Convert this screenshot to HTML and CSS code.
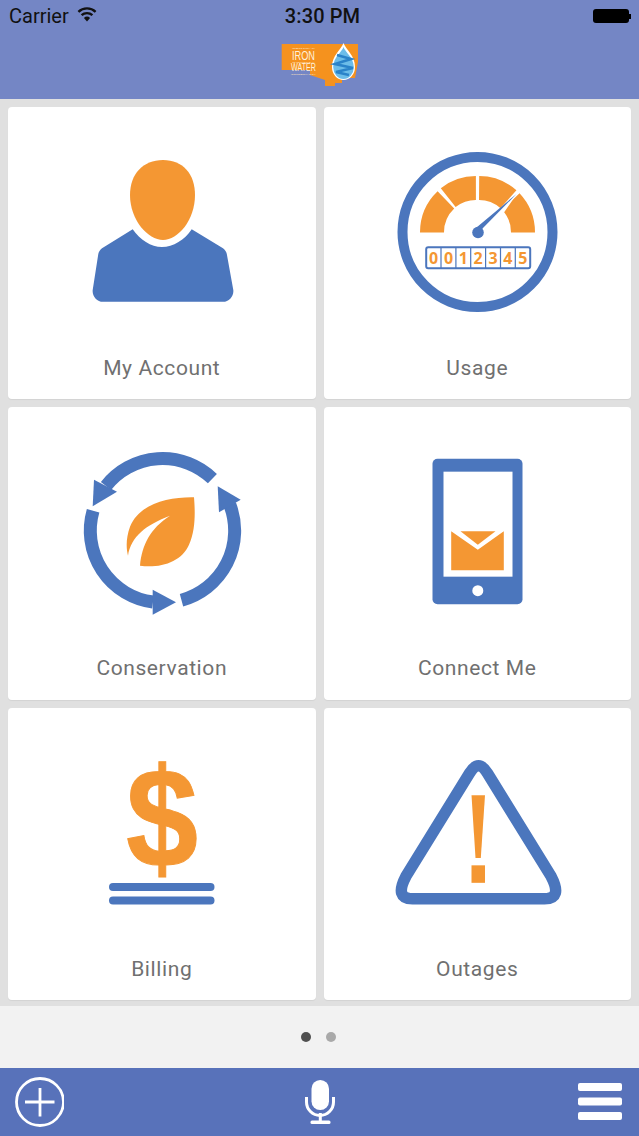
FILE: index.html
```html
<!DOCTYPE html>
<html lang="en">
<head>
<meta charset="utf-8">
<title>Central Iron County Water</title>
<link rel="stylesheet" href="styles.css">
</head>
<body>
<div class="app">
  <header class="header">
    <div class="status">
      <div class="status-left">
        <span>Carrier</span>
        <svg class="wifi" viewBox="0 0 20 15"><path d="M10 14.5 6.9 11a4.6 4.6 0 0 1 6.2 0Z" fill="#111"/><path d="M4.6 8.2a8 8 0 0 1 10.8 0" class="wifi-arc"/><path d="M1.4 4.8a12.6 12.6 0 0 1 17.2 0" class="wifi-arc"/></svg>
      </div>
      <div class="status-time">3:30 PM</div>
      <div class="status-right"><span class="battery"></span><span class="battery-tip"></span></div>
    </div>
    <svg class="logo" viewBox="281 42 78 45">
      <path class="logo-shape" d="M281.700 44H358V62L355 78H342V83H335V86H325V80L310 75V70H281.700Z"/>
      <text class="logo-small" x="292" y="49" textLength="23" lengthAdjust="spacingAndGlyphs">CENTRAL</text>
      <text class="logo-big" x="292" y="60" textLength="23" lengthAdjust="spacingAndGlyphs">IRON</text>
      <text class="logo-small" x="292" y="63" textLength="23" lengthAdjust="spacingAndGlyphs">COUNTY</text>
      <text class="logo-mid" x="291" y="71" textLength="25" lengthAdjust="spacingAndGlyphs">WATER</text>
      <text class="logo-small" x="291" y="74.500" textLength="25" lengthAdjust="spacingAndGlyphs">CONSERVANCY</text>
      <path d="M343.500 43C346 50 355 55 355 67A11.500 13 0 0 1 332 67C332 55 341 50 343.500 43Z" fill="#fff"/>
      <path d="M343.500 47C345 52 353.500 57 353.800 67A10.300 12 0 0 1 333.200 67C333.500 57 342 52 343.500 47Z" fill="#6cbde9"/>
      <path class="logo-band" d="M337 55 351 59 335 64 353 68 336 72 349 75"/>
    </svg>
  </header>

  <main class="main">
    <div class="grid">
      <a class="card">
        <svg class="icon" viewBox="8 107 307.500 240">
          <path class="orange" d="M163 160C183 160 195 174 195 195C195 220 178 240 163 240C148 240 130 220 130 195C130 174 143 160 163 160Z"/>
          <path class="blue" d="M132.700 229.300C140 240 151 247 162 247C173 247 185 240 191.700 229.300L223 248.300C225 250 226.500 252 226.800 254L233.300 290C234 296 229 301.800 223 301.800H103C97 301.800 92 296 92.700 290L98.300 254C98.600 252 100 250 102 248.300Z"/>
        </svg>
        <span class="label">My Account</span>
      </a>
      <a class="card">
        <svg class="icon" viewBox="323.500 107 307.500 240">
          <circle class="ring" cx="477" cy="232" r="75"/>
          <path class="gauge" d="M431.500 232.500A45 45 0 0 1 445.400 199.800M447.700 197.600A45 45 0 0 1 475.400 188M478.600 188A45 45 0 0 1 508 199.200M510.300 201.500A45 45 0 0 1 522.500 232.500"/>
          <path d="M521 187 484 224 470 226 472 240 486 238Z" fill="#fff"/>
          <path class="blue" d="M516 194 482 228.500 479 236 473 230Z"/>
          <circle class="blue" cx="477.500" cy="232.500" r="5.800"/>
          <rect class="meter" x="425.700" y="247.300" width="104" height="21" rx="2"/>
          <path class="meter-line" d="M440.500 247.300v21M455.400 247.300v21M470.200 247.300v21M485.100 247.300v21M500 247.300v21M514.800 247.300v21"/>
          <text class="digit" x="433.100" y="263.800">0</text>
          <text class="digit" x="448" y="263.800">0</text>
          <text class="digit" x="462.800" y="263.800">1</text>
          <text class="digit" x="477.700" y="263.800">2</text>
          <text class="digit" x="492.500" y="263.800">3</text>
          <text class="digit" x="507.400" y="263.800">4</text>
          <text class="digit" x="522.300" y="263.800">5</text>
        </svg>
        <span class="label">Usage</span>
      </a>
      <a class="card">
        <svg class="icon" viewBox="8 407.330 307.500 240">
          <path class="arc" d="M212.400 479A72 72 0 0 0 106 486.300"/>
          <polygon class="blue" points="94,480 117,492 92.700,506.700"/>
          <path class="arc" d="M93.100 511.100A72 72 0 0 0 153 602.400"/>
          <polygon class="blue" points="152.700,590 176,602.700 152.700,615"/>
          <path class="arc" d="M181.500 600.500A72 72 0 0 0 229.800 505"/>
          <polygon class="blue" points="217.700,486.700 240.700,500 219,512.700"/>
          <path class="orange" d="M194 497.500C170 497 140 503 130 527C126 538 126 548 128 556C131 537 146 525 170 516C150 529 142 545 140 566C160 569 182 562 189 545C196 530 195 510 194 497.500Z"/>
        </svg>
        <span class="label">Conservation</span>
      </a>
      <a class="card">
        <svg class="icon" viewBox="323.500 407.330 307.500 240">
          <rect class="blue" x="432" y="459" width="90" height="145.500" rx="5"/>
          <rect class="white" x="443" y="472" width="69" height="105"/>
          <circle class="white" cx="477.300" cy="591" r="5.500"/>
          <polygon class="orange" points="460,531.700 495,531.700 477.300,545"/>
          <polygon class="orange" points="450.700,531.700 477.300,550 503.300,531.700 503.300,570.700 450.700,570.700"/>
        </svg>
        <span class="label">Connect Me</span>
      </a>
      <a class="card">
        <svg class="icon" viewBox="8 707.670 307.500 240">
          <text class="dollar" x="162" y="866.500" textLength="72" lengthAdjust="spacingAndGlyphs">$</text>
          <rect class="blue" x="109" y="882.700" width="105.500" height="8" rx="4"/>
          <rect class="blue" x="109" y="896.200" width="105.500" height="8" rx="4"/>
        </svg>
        <span class="label">Billing</span>
      </a>
      <a class="card">
        <svg class="icon" viewBox="323.500 707.670 307.500 240">
          <path class="tri" d="M469 773Q478 758 487 773L550.600 876Q562.300 898.500 544 898.500H412Q393.700 898.500 405.400 876Z"/>
          <polygon class="orange" points="471,795 484.500,795 480.300,857.700 475,857.700"/>
          <rect class="orange" x="471" y="865" width="13.500" height="17.500"/>
        </svg>
        <span class="label">Outages</span>
      </a>
    </div>
  </main>

  <div class="pager">
    <span class="dot dot-on"></span>
    <span class="dot"></span>
  </div>

  <nav class="bar">
    <svg class="bar-icon" viewBox="0 0 50 50">
      <circle class="bar-line" cx="26" cy="25" r="23.500"/>
      <path class="bar-line" d="M11 25H40.500M26 11V39.500"/>
    </svg>
    <svg class="bar-icon" viewBox="0 0 50 50">
      <rect class="white" x="16.500" y="3" width="17.500" height="30" rx="8.700"/>
      <path class="mic" d="M11.500 20V25A13.500 13.500 0 0 0 38.500 25V20"/>
      <rect class="white" x="23.800" y="36" width="3" height="9"/>
      <rect class="white" x="15.500" y="43.500" width="20" height="3.500" rx="1.500"/>
    </svg>
    <svg class="bar-icon" viewBox="0 0 50 50">
      <rect class="white" x="3" y="6" width="44" height="8" rx="2"/>
      <rect class="white" x="3" y="20.500" width="44" height="8" rx="2"/>
      <rect class="white" x="3" y="35" width="44" height="8" rx="2"/>
    </svg>
  </nav>
</div>
</body>
</html>
```
FILE: styles.css
```css
* { box-sizing: border-box; }
html, body { margin: 0; padding: 0; }
body { font-family: Roboto, "Liberation Sans", sans-serif; background: #e0e0e0; }
.app { width: 639px; height: 1136px; display: flex; flex-direction: column; overflow: hidden; }

.header { height: 99px; background: #7486c5; display: flex; flex-direction: column; align-items: center; flex: none; }
.status { width: 100%; height: 32px; padding: 0 8px 0 9px; display: grid; grid-template-columns: 1fr auto 1fr; align-items: center; color: #111; font-size: 20px; }
.status-left { display: flex; align-items: center; gap: 8px; }
.wifi { width: 20px; height: 15px; margin-top: -4px; }
.wifi-arc { fill: none; stroke: #111; stroke-width: 2.400; }
.status-time { font-weight: 500; letter-spacing: 0.100px; margin-left: 5px; }
.status-right { display: flex; justify-content: flex-end; align-items: center; }
.battery { width: 36px; height: 14px; background: #000; border-radius: 3px; }
.battery-tip { width: 2px; height: 5px; background: #000; }
.logo { width: 78px; height: 45px; margin-top: 10px; }
.logo-shape { fill: #f5921e; }
.logo-small { font: 2.500px "Liberation Sans", sans-serif; fill: #fde3c0; }
.logo-big { font: 13px "Liberation Sans", sans-serif; fill: #fff1dd; }
.logo-mid { font: 10px "Liberation Sans", sans-serif; fill: #fff1dd; }
.logo-band { fill: none; stroke: #2a83c9; stroke-width: 2.600; }

.main { height: 907px; padding: 8px 8px 6px; flex: none; }
.grid { display: grid; grid-template-columns: 1fr 1fr; grid-auto-rows: 292.330px; gap: 8px; }
.card { background: #fff; border-radius: 4px; display: flex; flex-direction: column; align-items: center; box-shadow: 0 1px 1px rgba(0,0,0,0.06); }
.icon { width: 100%; height: 240px; display: block; flex: none; }
.label { height: 40px; line-height: 42px; font-size: 21px; color: #707070; letter-spacing: 0.600px; }

.blue { fill: #4b76bd; }
.orange { fill: #f49733; }
.white { fill: #fff; }
.ring { fill: none; stroke: #4b76bd; stroke-width: 10; }
.gauge { fill: none; stroke: #f49733; stroke-width: 24; }
.meter { fill: #fff; stroke: #4b76bd; stroke-width: 2; }
.meter-line { fill: none; stroke: #4b76bd; stroke-width: 1.200; }
.digit { font: 700 16px "Open Sans", "Liberation Sans", sans-serif; fill: #f49733; text-anchor: middle; }
.arc { fill: none; stroke: #4b76bd; stroke-width: 13; }
.tri { fill: none; stroke: #4b76bd; stroke-width: 11.500; }
.dollar { font: 700 141px "Liberation Sans", sans-serif; fill: #f49733; stroke: #f49733; stroke-width: 1; text-anchor: middle; }

.pager { height: 62px; flex: none; background: #f2f2f2; display: flex; justify-content: center; align-items: center; gap: 15px; padding-right: 2px; }
.dot { width: 10px; height: 10px; border-radius: 50%; background: #a9a9a9; }
.dot-on { background: #505050; }

.bar { height: 68px; flex: none; background: #5872ba; display: flex; justify-content: space-between; align-items: center; padding: 0 14px; }
.bar-icon { width: 50px; height: 50px; display: block; }
.bar-line { fill: none; stroke: #fff; stroke-width: 2.800; }
.mic { fill: none; stroke: #fff; stroke-width: 3; }
```
